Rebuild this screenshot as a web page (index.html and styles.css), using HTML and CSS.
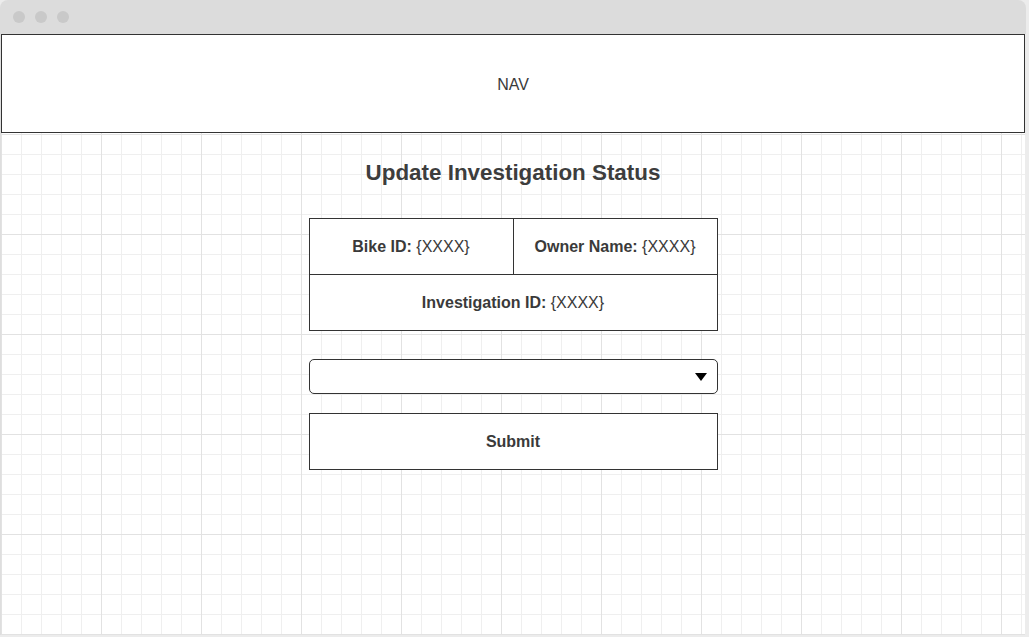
FILE: index.html
```html
<!DOCTYPE html>
<html>
<head>
<meta charset="utf-8">
<link rel="stylesheet" href="styles.css">
</head>
<body>
<div class="window">
  <div class="titlebar">
    <span class="dot"></span><span class="dot"></span><span class="dot"></span>
  </div>
  <div class="page">
    <div class="nav">NAV</div>
    <main class="content">
      <h1 class="title">Update Investigation Status</h1>
      <div class="info">
        <div class="cell"><b>Bike ID:</b>&nbsp;{XXXX}</div>
        <div class="cell cell-right"><b>Owner Name:</b>&nbsp;{XXXX}</div>
        <div class="cell cell-wide"><b>Investigation ID:</b>&nbsp;{XXXX}</div>
      </div>
      <div class="select">
        <svg class="arrow" width="12" height="8" viewBox="0 0 12 8"><polygon points="0,0 12,0 6,8" fill="#000"/></svg>
      </div>
      <div class="submit">Submit</div>
    </main>
  </div>
</div>
</body>
</html>
```
FILE: styles.css
```css
html, body {
  margin: 0;
  padding: 0;
  background: #ececec;
}
body {
  font-family: "Liberation Sans", Arial, sans-serif;
  color: #3a3a3a;
  width: 1029px;
  height: 637px;
  overflow: hidden;
}
.window {
  width: 1026px;
  height: 635px;
  display: flex;
  flex-direction: column;
}
.titlebar {
  height: 34px;
  background: #dcdcdc;
  border-radius: 8px 8px 0 0;
  display: flex;
  align-items: center;
  gap: 10px;
  padding-left: 13px;
  box-sizing: border-box;
}
.dot {
  width: 12px;
  height: 12px;
  border-radius: 50%;
  background: #c9c9c9;
}
.page {
  flex: 1;
  width: 1024px;
  background-color: #ffffff;
  background-image:
    linear-gradient(to right, #e2e2e2 1px, transparent 1px),
    linear-gradient(to bottom, #e2e2e2 1px, transparent 1px),
    linear-gradient(to right, #efefef 1px, transparent 1px),
    linear-gradient(to bottom, #efefef 1px, transparent 1px);
  background-size: 100px 100px, 100px 100px, 20px 20px, 20px 20px;
  border-left: 1px solid #dedede;
}
.nav {
  height: 99px;
  box-sizing: border-box;
  border: 1px solid #333333;
  background: #ffffff;
  display: flex;
  align-items: center;
  justify-content: center;
  font-size: 16px;
  padding-top: 2px;
}
.content {
  display: flex;
  flex-direction: column;
  align-items: center;
}
.title {
  margin: 27px 0 0 0;
  font-size: 22.4px;
  line-height: 26px;
  font-weight: bold;
  color: #3d3d3d;
}
.info {
  margin-top: 32px;
  width: 409px;
  box-sizing: border-box;
  display: grid;
  grid-template-columns: 203px 204px;
  border: 1px solid #333333;
  background: #ffffff;
}
.cell {
  height: 55px;
  display: flex;
  align-items: center;
  justify-content: center;
  font-size: 16px;
}
.cell-right {
  border-left: 1px solid #333333;
}
.cell-wide {
  grid-column: 1 / 3;
  border-top: 1px solid #333333;
}
.select {
  margin-top: 28px;
  width: 409px;
  height: 35px;
  box-sizing: border-box;
  border: 1px solid #333333;
  border-radius: 5px;
  background: #ffffff;
  display: flex;
  align-items: center;
  justify-content: flex-end;
  padding-right: 10px;
}
.arrow {
  display: block;
}
.submit {
  margin-top: 19px;
  width: 409px;
  height: 57px;
  box-sizing: border-box;
  border: 1px solid #333333;
  background: #ffffff;
  display: flex;
  align-items: center;
  justify-content: center;
  font-size: 16px;
  font-weight: bold;
}
```
